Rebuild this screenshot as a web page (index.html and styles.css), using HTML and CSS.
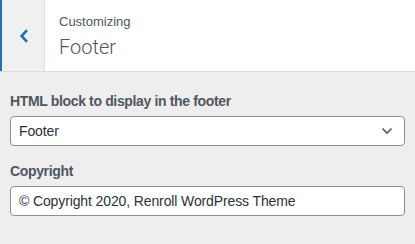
FILE: index.html
```html
<html>
    <head>
        <meta charset="UTF-8">
        <title>Customizing Footer</title>
        <link rel="stylesheet" href="styles.css">
    </head>
    <body>
        <div class="section-title">
            <button class="back" type="button" aria-label="Back">
                <svg width="10" height="14" viewBox="0 0 10 14"><path d="M8 1.2 L2.6 7 L8 12.8" fill="none" stroke="#2271b1" stroke-width="2.6"/></svg>
            </button>
            <div class="title">
                <span class="action">Customizing</span>
                <h3>Footer</h3>
            </div>
        </div>
        <div class="controls">
            <div class="control">
                <label class="control-title" for="footer-block">HTML block to display in the footer</label>
                <div class="select">
                    <select id="footer-block">
                        <option>Footer</option>
                    </select>
                    <svg class="arrow" width="12" height="8" viewBox="0 0 12 8"><path d="M1.5 1.5 L6 6 L10.5 1.5" fill="none" stroke="#50575e" stroke-width="1.6"/></svg>
                </div>
            </div>
            <div class="control">
                <label class="control-title" for="copyright">Copyright</label>
                <input type="text" id="copyright" value="© Copyright 2020, Renroll WordPress Theme" />
            </div>
        </div>
    </body>
</html>
```

FILE: styles.css
```css
* {
    box-sizing:border-box;
    font-family: "Liberation Sans", Arial, sans-serif;
}
body {
    margin:0;
    background:#eeeeee;
    width:415px;
    height:244px;
    overflow:hidden;
}
.section-title {
    display:flex;
    height:72px;
    background:#ffffff;
    border-bottom:1px solid #dcdcde;
}
.back {
    width:45px;
    margin:0;
    padding:0 0 0 1px;
    border:none;
    border-left:2px solid #2271b1;
    border-right:1px solid #dcdcde;
    background:#f0f0f1;
    display:flex;
    align-items:center;
    justify-content:center;
}
.title {
    padding:14px 10px 0 14px;
}
.action {
    display:block;
    font-size:13px;
    line-height:16px;
    color:#50575e;
}
.title h3 {
    margin:4px 0 0 0;
    font-family: Roboto, "Liberation Sans", sans-serif;
    font-size:20px;
    font-weight:300;
    line-height:26px;
    color:#50575e;
}
.controls {
    padding:19px 10px 0 10px;
}
.control {
    margin-bottom:15px;
}
.control-title {
    display:block;
    font-size:14px;
    font-weight:bold;
    letter-spacing:-0.35px;
    line-height:20px;
    color:#50575e;
    margin-bottom:5px;
}
.select {
    position:relative;
}
select, input {
    display:block;
    width:100%;
    height:30px;
    margin:0;
    border:1px solid #8c8f94;
    border-radius:4px;
    background:#ffffff;
    font-size:14px;
    letter-spacing:-0.12px;
    color:#2c3338;
}
select {
    appearance:none;
    -webkit-appearance:none;
    padding:0 24px 0 8px;
}
input {
    padding:0 8px;
}
.arrow {
    position:absolute;
    right:12px;
    top:11px;
}
```
